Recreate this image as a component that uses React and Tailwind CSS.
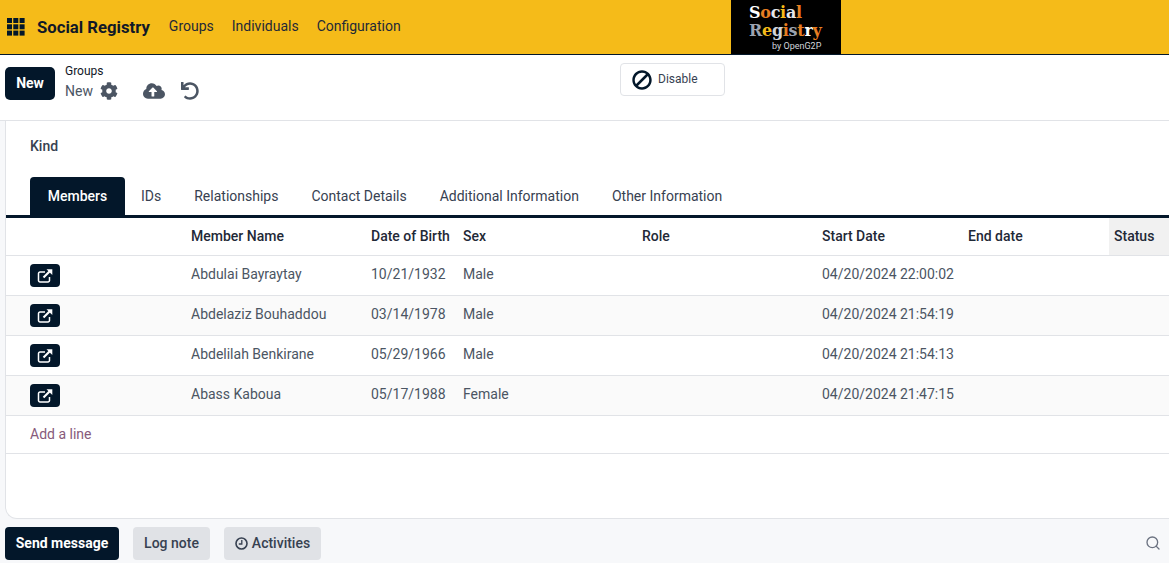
import React from "react";
import { FaCog, FaCloudUploadAlt, FaUndo, FaBan } from "react-icons/fa";
import { Search } from "lucide-react";

const Grid = () => (
  <svg width="18" height="18" viewBox="0 0 18 18" fill="#03172a">
    {[0, 6.3, 12.6].flatMap((y) => [0, 6.3, 12.6].map((x) => <rect key={x + "-" + y} x={x} y={y} width="5" height="5" />))}
  </svg>
);

const ExtLink = () => (
  <svg width="16" height="16" viewBox="0 0 16 16" fill="none" stroke="white">
    <path d="M12.5 9v3.5A1.5 1.5 0 0 1 11 14H3a1.5 1.5 0 0 1-1.5-1.5v-7A1.5 1.5 0 0 1 3 4h5" strokeWidth="1.5" />
    <path d="M6.5 9.5 13 3" strokeWidth="2.2" />
    <path d="M9.5 1.2H15.3V7z" fill="white" stroke="none" />
  </svg>
);

const Clock = () => (
  <svg width="13" height="13" viewBox="0 0 13 13" fill="none" stroke="currentColor" strokeWidth="1.6">
    <circle cx="6.5" cy="6.5" r="5.5" />
    <path d="M6.8 3v4H3.8" strokeWidth="1.3" />
  </svg>
);

const rows = [
  ["Abdulai Bayraytay", "10/21/1932", "Male", "04/20/2024 22:00:02"],
  ["Abdelaziz Bouhaddou", "03/14/1978", "Male", "04/20/2024 21:54:19"],
  ["Abdelilah Benkirane", "05/29/1966", "Male", "04/20/2024 21:54:13"],
  ["Abass Kaboua", "05/17/1988", "Female", "04/20/2024 21:47:15"],
];

const cols = "grid grid-cols-[185px_180px_92px_179px_180px_146px_141px_1fr] items-center";

export default function App() {
  return (
    <div className="h-[563px] w-[1169px] overflow-hidden bg-[#f7f8fa] text-[14px] text-[#374151] flex flex-col font-['Roboto',sans-serif]">
      <header className="h-[55px] shrink-0 bg-[#f5bb19] border-b border-[#03172a] flex relative">
        <div className="pl-[7px] flex items-center"><Grid /></div>
        <div className="ml-[12px] pt-[1px] flex items-center text-[16.7px] font-bold text-[#111827]">Social Registry</div>
        <nav className="ml-[19px] flex items-center gap-[18px] text-[14px] text-[#1f2937] pb-[2px]">
          <span>Groups</span>
          <span>Individuals</span>
          <span>Configuration</span>
        </nav>
        <div className="absolute left-[731px] top-0 w-[110px] h-[54px] bg-black pl-[18px] pt-[4px] font-['DejaVu_Serif',serif] font-bold text-[16px] leading-[18px] tracking-[-0.3px]">
          <div>
            <span className="text-white">S</span><span className="text-[#e67e22]">o</span><span className="text-[#e5e7eb]">c</span><span className="text-[#f5bb19]">i</span><span className="text-[#e5e7eb]">a</span><span className="text-[#e67e22]">l</span>
          </div>
          <div>
            <span className="text-[#9ca3af]">R</span><span className="text-[#f5bb19]">e</span><span className="text-[#d1d5db]">g</span><span className="text-[#e67e22]">i</span><span className="text-[#9ca3af]">s</span><span className="text-[#e67e22]">t</span><span className="text-white">r</span><span className="text-[#e67e22]">y</span>
          </div>
          <div className="pl-[23px] mt-[1px] font-['Roboto',sans-serif] font-normal text-[9px] leading-[10px] tracking-normal text-[#d1d5db]">by OpenG2P</div>
        </div>
      </header>

      <div className="h-[66px] shrink-0 bg-white border-b border-[#e1e3e7] flex relative">
        <button className="ml-[5px] mt-[12px] w-[50px] h-[33px] rounded-[5px] bg-[#03172a] text-white font-bold text-[14px]">New</button>
        <div className="ml-[10px] mt-[9px]">
          <div className="text-[12px] leading-[14px] text-[#111827]">Groups</div>
          <div className="flex items-center mt-[3px] text-[#4b5563]">
            <span className="text-[14px] leading-[20px]">New</span>
            <FaCog className="ml-[7px] w-[18px] h-[18px] text-[#4b5563]" />
            <FaCloudUploadAlt className="ml-[25px] w-[22px] h-[20px] text-[#4b5563]" />
            <FaUndo className="ml-[16px] w-[18px] h-[18px] text-[#4b5563]" />
          </div>
        </div>
        <button className="absolute left-[620px] top-[8px] w-[105px] h-[33px] pb-[2px] rounded-[4px] border border-[#e1e3e7] bg-white flex items-center pl-[11px] gap-[6px] text-[12px] text-[#374151]">
          <FaBan className="w-[20px] h-[20px] text-[#03172a] -scale-x-100 mt-[2px]" />
          Disable
        </button>
      </div>

      <main className="h-[398px] shrink-0 ml-[5px] bg-white border-l border-b border-[#e1e3e7] rounded-bl-[12px] flex flex-col">
        <div className="pl-[24px] pt-[17px] h-[56px] shrink-0 text-[14px] leading-[16px] font-medium text-[#374151]">Kind</div>
        <div className="flex h-[41px] shrink-0 border-b-[3px] border-[#03172a] pl-[24px] text-[#374151]">
          <div className="w-[95px] h-[38px] bg-[#03172a] text-white font-medium rounded-t-[4px] flex items-center justify-center">Members</div>
          <div className="ml-[16px] flex items-center">IDs</div>
          <div className="ml-[33px] flex items-center">Relationships</div>
          <div className="ml-[33px] flex items-center">Contact Details</div>
          <div className="ml-[33px] flex items-center">Additional Information</div>
          <div className="ml-[33px] flex items-center">Other Information</div>
        </div>
        <div className={cols + " h-[38px] shrink-0 border-b border-[#e1e3e7] font-medium text-[#1f2937]"}>
          <div />
          <div>Member Name</div>
          <div>Date of Birth</div>
          <div>Sex</div>
          <div>Role</div>
          <div>Start Date</div>
          <div>End date</div>
          <div className="h-full bg-[#f1f1f1] pl-[5px] flex items-center">Status</div>
        </div>
        {rows.map((r, i) => (
          <div key={r[0]} className={cols + " h-[40px] shrink-0 border-b border-[#e1e3e7] text-[#4b5563] " + (i % 2 ? "bg-[#fafafa]" : "bg-white")}>
            <div className="pl-[24px]">
              <button className="w-[30px] h-[23px] rounded-[4px] bg-[#03172a] flex items-center justify-center"><ExtLink /></button>
            </div>
            <div className="pb-[2px]">{r[0]}</div>
            <div className="pb-[2px]">{r[1]}</div>
            <div className="pb-[2px]">{r[2]}</div>
            <div />
            <div className="pb-[2px]">{r[3]}</div>
            <div />
            <div />
          </div>
        ))}
        <div className="h-[38px] shrink-0 border-b border-[#e1e3e7] pl-[24px] flex items-center text-[#875a7b]">Add a line</div>
      </main>

      <footer className="flex-1 flex items-start pt-[8px] pl-[5px] pr-[8px]">
        <button className="w-[114px] h-[33px] rounded-[4px] bg-[#03172a] text-white font-bold">Send message</button>
        <button className="ml-[14px] w-[77px] h-[33px] rounded-[4px] bg-[#e0e2e6] text-[#374151] font-medium">Log note</button>
        <button className="ml-[14px] w-[97px] h-[33px] rounded-[4px] bg-[#e0e2e6] text-[#374151] font-medium flex items-center justify-center gap-[4px]">
          <Clock />
          Activities
        </button>
        <Search className="ml-auto mt-[8px] w-[16px] h-[16px] text-[#6b7280]" strokeWidth={2} />
      </footer>
    </div>
  );
}
